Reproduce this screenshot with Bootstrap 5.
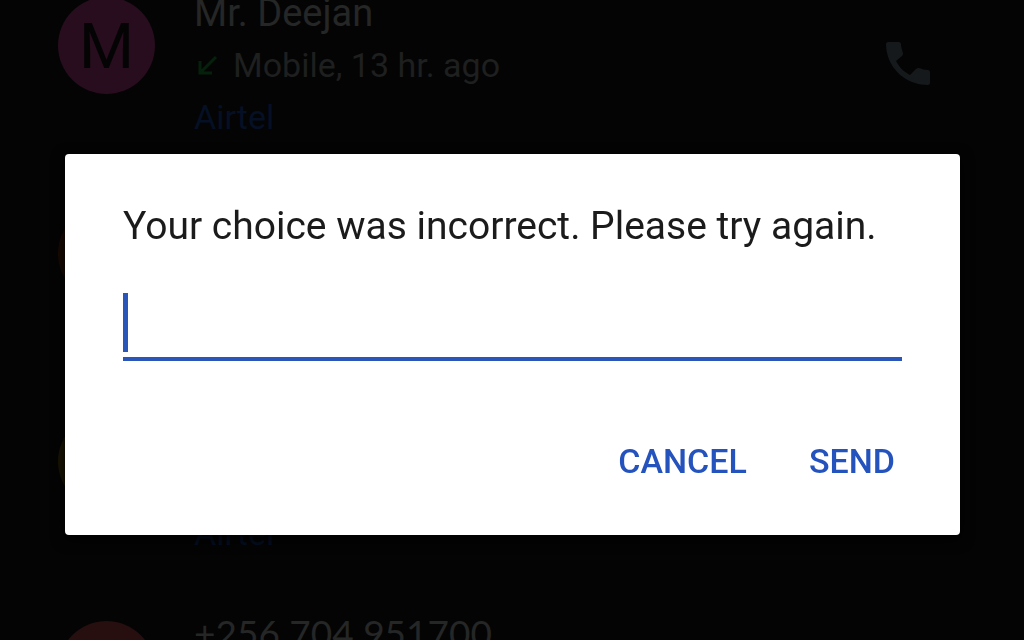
<!DOCTYPE html>
<html lang="en">
<head>
<meta charset="utf-8">
<meta name="viewport" content="width=device-width, initial-scale=1">
<title>Call log</title>
<link href="https://cdn.jsdelivr.net/npm/bootstrap@5.3.0/dist/css/bootstrap.min.css" rel="stylesheet">
<style>
  body { background: #040404; color: #252626; font-family: Roboto, sans-serif; }
  .call-log { height: 100vh; }
  .call-list { margin-top: -13px; padding: 0 93px 0 58px; }
  .call-row { min-height: 208px; gap: 39px; }
  .call-text { font-size: 34px; line-height: 52px; }
  .call-name { font-size: 38px; }
  .call-number { font-family: Lato, sans-serif; font-size: 37px; line-height: 44px; }
  .call-meta { color: #1e1f1f; gap: 15px; }
  .carrier { color: #051025; }
  .carrier-last { margin-top: 104px; }
  .avatar { width: 97px; height: 97px; margin-top: 10px; color: #040404; font-size: 63px; }
  .avatar-plum { background: #270d1d; padding-top: 3px; }
  .avatar-orange { background: #1a0a03; }
  .avatar-yellow { background: #1a1503; }
  .avatar-red { background: #270e0f; }
  .call-btn { margin-top: 52px; color: #15191b; }
  .overlay { padding: 48px 64px 0 65px; }
  .prompt { border-radius: 4px; padding: 48px 58px 50px; box-shadow: 0 4px 14px #000; }
  .prompt-title { color: #1b1b1b; font-size: 39px; line-height: 48px; }
  .field { margin-top: 43px; padding-bottom: 5px; border-bottom: 4px solid #2a55b9; }
  .caret { width: 5px; background: #2a55b9; }
  .field input { height: 59px; font-size: 39px; outline: 0; }
  .prompt-actions { margin-top: 76px; gap: 48px; }
  .prompt-actions .btn { color: #2553be; font-size: 34px; line-height: 48px; font-weight: 500; padding: 0 7px; border: 0; }
</style>
</head>
<body>
<main class="call-log overflow-hidden">
  <ul class="call-list list-unstyled mb-0">
    <li class="call-row d-flex align-items-start">
      <div class="avatar avatar-plum rounded-circle d-flex align-items-center justify-content-center flex-shrink-0">M</div>
      <div class="call-text flex-grow-1">
        <div class="call-name">Mr. Deejan</div>
        <div class="call-meta d-flex align-items-center">
          <svg width="24" height="24" viewBox="0 0 24 24" fill="none" stroke="#06210b" stroke-width="3" aria-hidden="true"><path d="M22 4 7 19M6 8v12h12"/></svg>
          <span>Mobile, 13 hr. ago</span>
        </div>
        <div class="carrier">Airtel</div>
      </div>
      <button type="button" class="call-btn btn border-0 p-0 lh-1" aria-label="Call Mr. Deejan">
        <svg width="48" height="48" viewBox="0 0 48 48" fill="currentColor" aria-hidden="true"><path d="M5 3h11c1 0 2 1 2 2 0 3 1 6 2 9 0 1 0 2-1 3l-6 5c4 7 7 10 14 14l6-6c1-1 2-1 3-1 3 1 6 2 9 2 1 0 2 1 2 2v11c0 1-1 2-2 2C21 46 3 27 3 5c0-1 1-2 2-2z"/></svg>
      </button>
    </li>
    <li class="call-row d-flex align-items-start">
      <div class="avatar avatar-orange rounded-circle flex-shrink-0"></div>
    </li>
    <li class="call-row d-flex align-items-start">
      <div class="avatar avatar-yellow rounded-circle flex-shrink-0"></div>
      <div class="call-text carrier carrier-last">Airtel</div>
    </li>
    <li class="call-row d-flex align-items-start">
      <div class="avatar avatar-red rounded-circle d-flex align-items-center justify-content-center flex-shrink-0">
        <svg width="64" height="64" viewBox="0 0 64 64" fill="currentColor" aria-hidden="true"><circle cx="32" cy="16" r="13"/><path d="M6 58V50c0-10 17-16 26-16s26 6 26 16v8z"/></svg>
      </div>
      <div class="call-text"><div class="call-number">+256 704 951700</div></div>
    </li>
  </ul>
</main>
<div class="overlay position-fixed top-0 start-0 w-100 h-100 d-flex align-items-center">
  <form class="prompt bg-white w-100" role="dialog" aria-labelledby="prompt-title">
    <label id="prompt-title" class="prompt-title d-block" for="reply">Your choice was incorrect. Please try again.</label>
    <div class="field d-flex">
      <span class="caret"></span>
      <input id="reply" type="text" class="border-0 p-0 flex-grow-1 bg-transparent" autocomplete="off">
    </div>
    <div class="prompt-actions d-flex justify-content-end">
      <button type="button" class="btn">CANCEL</button>
      <button type="submit" class="btn">SEND</button>
    </div>
  </form>
</div>
<script src="https://cdn.jsdelivr.net/npm/bootstrap@5.3.0/dist/js/bootstrap.bundle.min.js"></script>
</body>
</html>
